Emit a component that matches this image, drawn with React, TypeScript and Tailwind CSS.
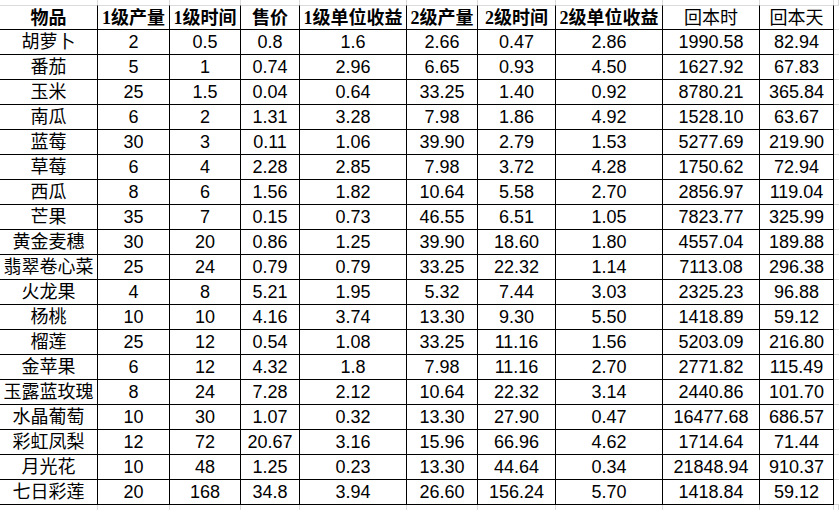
const headers = [
  { label: "物品", bold: true },
  { label: "1级产量", bold: true },
  { label: "1级时间", bold: true },
  { label: "售价", bold: true },
  { label: "1级单位收益", bold: true },
  { label: "2级产量", bold: true },
  { label: "2级时间", bold: true },
  { label: "2级单位收益", bold: true },
  { label: "回本时", bold: false },
  { label: "回本天", bold: false },
];

const rows: string[][] = [
  ["胡萝卜", "2", "0.5", "0.8", "1.6", "2.66", "0.47", "2.86", "1990.58", "82.94"],
  ["番茄", "5", "1", "0.74", "2.96", "6.65", "0.93", "4.50", "1627.92", "67.83"],
  ["玉米", "25", "1.5", "0.04", "0.64", "33.25", "1.40", "0.92", "8780.21", "365.84"],
  ["南瓜", "6", "2", "1.31", "3.28", "7.98", "1.86", "4.92", "1528.10", "63.67"],
  ["蓝莓", "30", "3", "0.11", "1.06", "39.90", "2.79", "1.53", "5277.69", "219.90"],
  ["草莓", "6", "4", "2.28", "2.85", "7.98", "3.72", "4.28", "1750.62", "72.94"],
  ["西瓜", "8", "6", "1.56", "1.82", "10.64", "5.58", "2.70", "2856.97", "119.04"],
  ["芒果", "35", "7", "0.15", "0.73", "46.55", "6.51", "1.05", "7823.77", "325.99"],
  ["黄金麦穗", "30", "20", "0.86", "1.25", "39.90", "18.60", "1.80", "4557.04", "189.88"],
  ["翡翠卷心菜", "25", "24", "0.79", "0.79", "33.25", "22.32", "1.14", "7113.08", "296.38"],
  ["火龙果", "4", "8", "5.21", "1.95", "5.32", "7.44", "3.03", "2325.23", "96.88"],
  ["杨桃", "10", "10", "4.16", "3.74", "13.30", "9.30", "5.50", "1418.89", "59.12"],
  ["榴莲", "25", "12", "0.54", "1.08", "33.25", "11.16", "1.56", "5203.09", "216.80"],
  ["金苹果", "6", "12", "4.32", "1.8", "7.98", "11.16", "2.70", "2771.82", "115.49"],
  ["玉露蓝玫瑰", "8", "24", "7.28", "2.12", "10.64", "22.32", "3.14", "2440.86", "101.70"],
  ["水晶葡萄", "10", "30", "1.07", "0.32", "13.30", "27.90", "0.47", "16477.68", "686.57"],
  ["彩虹凤梨", "12", "72", "20.67", "3.16", "15.96", "66.96", "4.62", "1714.64", "71.44"],
  ["月光花", "10", "48", "1.25", "0.23", "13.30", "44.64", "0.34", "21848.94", "910.37"],
  ["七日彩莲", "20", "168", "34.8", "3.94", "26.60", "156.24", "5.70", "1418.84", "59.12"],
];

// sheet columns, last one is the empty spill column past the table
const gridCols =
  "grid grid-cols-[98px_72px_71px_59px_107px_71px_78px_107px_97px_74px_5px]";

function Strip({ height }: { height: string }) {
  return (
    <div className={gridCols}>
      {Array.from({ length: 11 }).map((_, i) => (
        <div key={i} className={`${height} border-r border-[#dadada]`} />
      ))}
    </div>
  );
}

export default function App() {
  return (
    <div className="w-[839px] h-[510px] overflow-hidden bg-white text-black">
      <Strip height="h-[5px]" />

      {/* header */}
      <div className={gridCols}>
        {headers.map((h, i) => (
          <div
            key={i}
            className={`h-[25px] flex items-center justify-center border-t border-t-[#dadada] border-r border-r-black border-b border-b-black text-[18px] leading-none whitespace-nowrap font-['Liberation_Serif','Noto_Sans_CJK_SC',serif] ${
              h.bold ? "font-bold" : "font-normal"
            }`}
          >
            {h.label}
          </div>
        ))}
        <div className="h-[25px] border-t border-b border-[#dadada]" />
      </div>

      {rows.map((row, r) => (
        <div key={r} className={gridCols}>
          {row.map((cell, c) => (
            <div
              key={c}
              className="h-[25px] flex items-center justify-center border-r border-b border-black text-[18px] leading-none whitespace-nowrap font-['Liberation_Sans','Noto_Sans_CJK_SC',sans-serif]"
            >
              {cell}
            </div>
          ))}
          <div className="h-[25px] border-b border-[#dadada]" />
        </div>
      ))}

      <Strip height="h-[6px]" />
    </div>
  );
}
